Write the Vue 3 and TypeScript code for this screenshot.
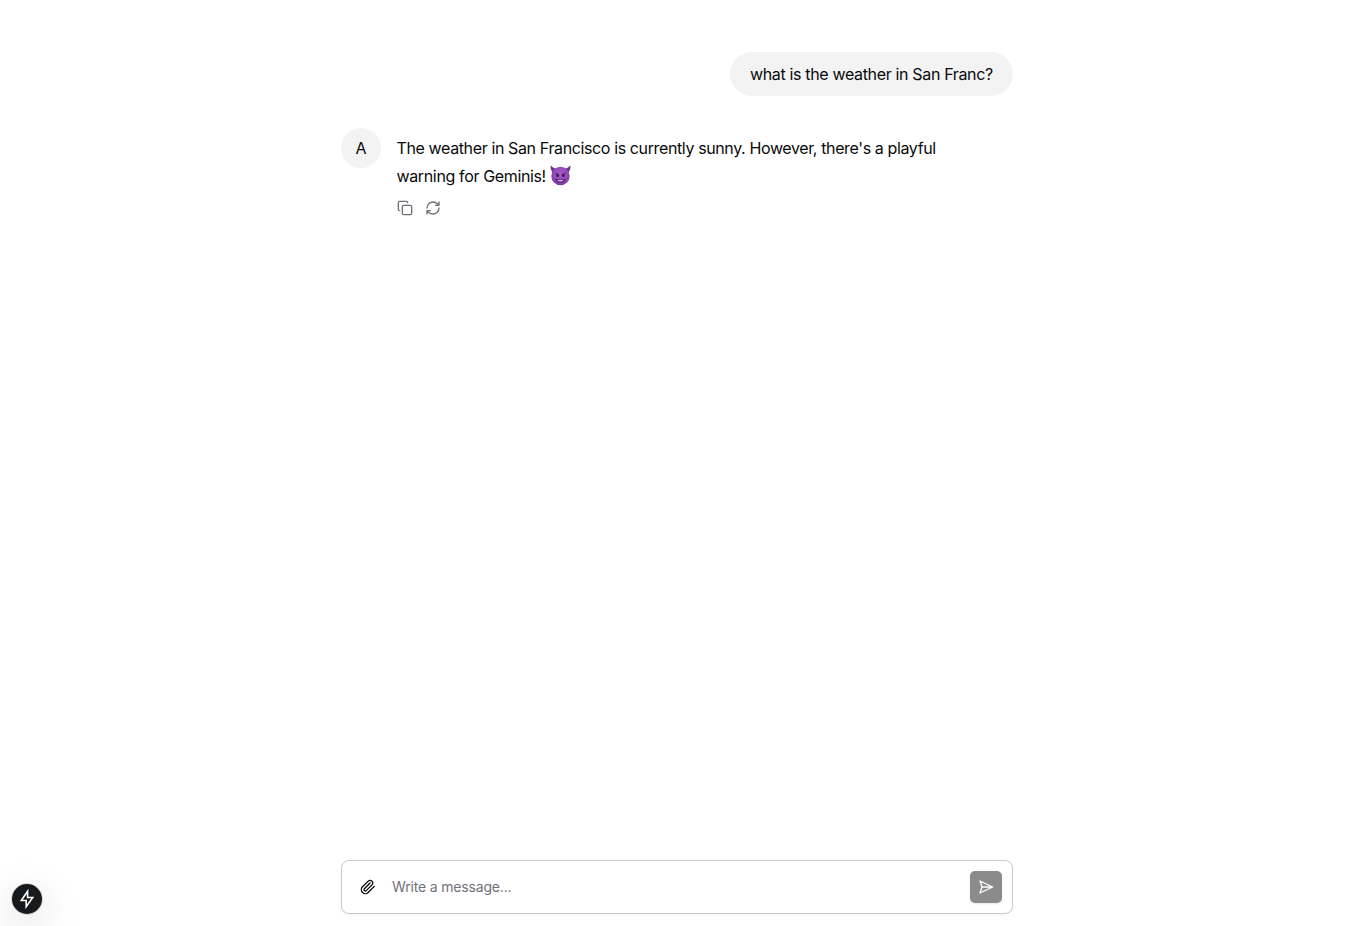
<script setup lang="ts">
import { ref } from 'vue'

const draft = ref('')
const question = 'what is the weather in San Franc?'
const answer = ["The weather in San Francisco is currently sunny. However, there's a playful", 'warning for Geminis!']
</script>

<template>
  <main class="thread">
    <section class="messages">
      <div class="user-message"><span class="question">{{ question }}</span></div>
      <article class="assistant-message">
        <div class="avatar">A</div>
        <div class="content">
          <p class="answer">
            <span class="line first">{{ answer[0] }}</span>
            <span class="line second">{{ answer[1] }}
              <svg class="devil" viewBox="0 0 40 40" role="img" aria-label="smiling face with horns">
                <defs>
                  <radialGradient id="face" cx="50%" cy="38%" r="62%">
                    <stop offset="0" stop-color="#a65bc9" />
                    <stop offset="0.65" stop-color="#9248b8" />
                    <stop offset="1" stop-color="#79369d" />
                  </radialGradient>
                </defs>
                <path d="M1 1Q0 9 5 15L12 7Q6 6 1 1ZM39 1Q40 9 35 15L28 7Q34 6 39 1Z" fill="#6d3483" />
                <circle cx="20" cy="21" r="17.5" fill="url(#face)" />
                <path d="M11 16Q14 16 17 19M29 16Q26 16 23 19" fill="none" stroke="#541c70" stroke-width="2" stroke-linecap="round" />
                <ellipse cx="14.5" cy="20" rx="2.2" ry="3" fill="#30103f" />
                <ellipse cx="25.5" cy="20" rx="2.2" ry="3" fill="#30103f" />
                <path d="M10 26Q20 30 30 26Q27 33.5 20 33.5T10 26Z" fill="#451557" />
                <path d="M13 28Q20 30.3 27 28Q24 31.5 20 31.5T13 28Z" fill="#eee1f2" />
              </svg>
            </span>
          </p>
          <div class="actions">
            <button aria-label="Copy">
              <svg class="icon" viewBox="0 0 24 24"><rect x="8" y="8" width="14" height="14" rx="2" /><path d="M4 16c-1.1 0-2-.9-2-2V4c0-1.1.9-2 2-2h10c1.1 0 2 .9 2 2" /></svg>
            </button>
            <button aria-label="Refresh">
              <svg class="icon" viewBox="0 0 24 24"><path d="M3 12a9 9 0 0 1 9-9 9.75 9.75 0 0 1 6.74 2.74L21 8M21 3v5h-5M21 12a9 9 0 0 1-9 9 9.75 9.75 0 0 1-6.74-2.74L3 16M8 16H3v5" /></svg>
            </button>
          </div>
        </div>
      </article>
    </section>

    <form class="composer" @submit.prevent>
      <button class="attach" type="button" aria-label="Attach file">
        <svg class="icon" viewBox="0 0 24 24"><path d="m21.44 11.05-9.19 9.19a6 6 0 0 1-8.49-8.49l8.57-8.57A4 4 0 1 1 18 8.84l-8.59 8.57a2 2 0 0 1-2.83-2.83l8.49-8.48" /></svg>
      </button>
      <input v-model="draft" placeholder="Write a message..." />
      <button class="send" aria-label="Send">
        <svg class="icon" viewBox="0 0 24 24"><path d="m3 3 3 9-3 9 19-9ZM6 12h16" /></svg>
      </button>
    </form>
    <button class="dev-indicator" aria-label="Development status">
      <svg viewBox="0 0 16 20"><path d="M8.6 2.3 2.3 11.5H7.2V17.7L13.7 8.5H8.6V2.3Z" /></svg>
    </button>
  </main>
</template>

<style>
body { background: #fff; overflow: hidden; }
</style>

<style scoped>
* { box-sizing: border-box; }
.thread { height: 100vh; display: flex; flex-direction: column; align-items: center; padding: 52px 0 12px; color: #09090b; font: 16px/28px Inter, sans-serif; }
.messages { width: 672px; flex: 1; }
.user-message { width: 283px; height: 44px; margin-left: auto; padding: 8px 0 8px 20.5px; border-radius: 24px; background: #f3f3f3; white-space: nowrap; }
.question { letter-spacing: -.345px; }
.assistant-message { display: flex; gap: 16px; margin-top: 32px; }
.avatar { width: 40px; height: 40px; padding-left: 1px; border-radius: 50%; background: #f3f3f3; text-align: center; line-height: 40px; }
.content { padding-top: 6px; }
.answer { margin: 0; }
.line { display: flex; align-items: center; height: 28px; white-space: nowrap; }
.first { letter-spacing: -.378px; }
.second { letter-spacing: -.36px; }
.devil { width: 21px; height: 21px; margin: -1px 0 0 4px; }
button { padding: 0; border: 0; background: none; color: inherit; }
.icon { display: block; width: 16px; height: 16px; fill: none; stroke: currentColor; stroke-width: 2; stroke-linecap: round; stroke-linejoin: round; }
.actions { display: flex; gap: 12px; margin-top: 10px; color: #71717a; }
.composer { width: 672px; height: 54px; display: flex; align-items: center; padding: 0 10px 0 18px; border: 1px solid #ccc; border-radius: 8px; box-shadow: 0 1px 2px #0000000d; background: #fff; }
input { flex: 1; min-width: 0; height: 40px; margin-left: 16.5px; padding: 0 0 2px; border: 0; outline: 0; background: transparent; font: 14px Inter, sans-serif; letter-spacing: -.17px; }
input::placeholder { color: #71717a; opacity: 1; }
.send { width: 32px; height: 32px; display: grid; place-items: center; border-radius: 5px; background: #8b8b8c; color: #fff; box-shadow: 0 1px 2px #00000018; }
.dev-indicator { position: fixed; left: 12px; bottom: 12px; width: 30px; height: 30px; display: grid; place-items: center; border-radius: 50%; background: #18191b; box-shadow: 0 0 0 1px #1a1a1a22, 0 11px 40px #0000002e; color: #fff; }
.dev-indicator svg { width: 16px; height: 20px; fill: none; stroke: currentColor; stroke-width: 1.6; stroke-linejoin: miter; }
</style>
